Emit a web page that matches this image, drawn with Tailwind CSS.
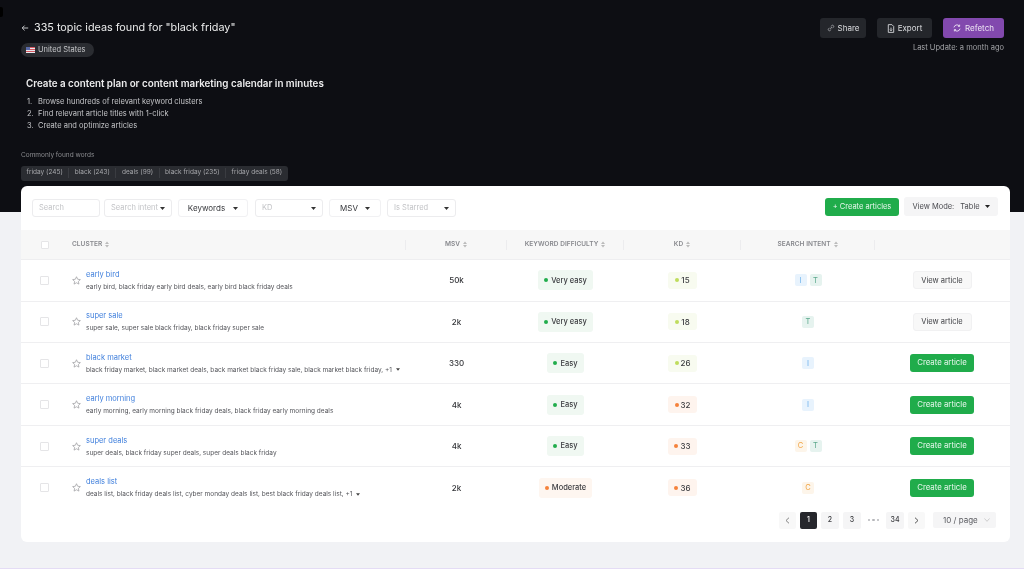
<!doctype html>
<html><head><meta charset="utf-8"><script src="https://cdn.jsdelivr.net/npm/@tailwindcss/browser@4"></script></head>
<body class="m-0">
<div class="relative w-[1024px] h-[569px] overflow-hidden bg-[#f1f2f5] font-['Inter',sans-serif] flex flex-col border-b border-[#e4dcf5] blur-[0.35px]">
  <span class="absolute left-0 top-[7px] w-[3px] h-[10px] rounded-r-[2px] bg-black"></span>
  <header class="h-[212px] shrink-0 bg-[#0d0e13] pl-[21px] pr-[20px] pt-[18px] text-white">
    <div class="flex justify-between items-start">
      <div>
        <div class="flex items-center gap-[5px] h-[19px]">
          <svg class="w-[8px] h-[8px]" viewBox="0 0 10 10" fill="none" stroke="#c8c9cc" stroke-width="1.2"><path d="M9 5H1.500M4.500 2 1.500 5l3 3"/></svg>
          <span class="text-[10.800px] leading-[19px] text-[#eceded]">335 topic ideas found for "black friday"</span>
        </div>
        <div class="mt-[6px] flex w-[73px] items-center gap-[3px] h-[14px] px-[5px] rounded-full bg-[#2a2c31] text-[7.500px] text-[#c5c6c9]">
          <svg class="w-[9px] h-[6px]" viewBox="0 0 9 6"><rect width="9" height="6" fill="#e8e8ee"/><path d="M0 .5h9M0 2.500h9M0 4.500h9" stroke="#d4565f"/><rect width="4" height="3" fill="#5a6aa8"/></svg>
          United States
        </div>
      </div>
      <div class="flex flex-col items-end">
        <div class="flex gap-[11px]">
          <button class="h-[20px] w-[46px] rounded-[3px] bg-[#24262b] text-[8px] text-[#dcdde0] flex items-center justify-center gap-[3px]">
            <svg class="w-[8px] h-[8px]" viewBox="0 0 10 10" fill="none" stroke="#a9abb0" stroke-width="1"><path d="M4 6 6.200 3.800M3.300 4.700 2 6a1.400 1.400 0 0 0 2 2l1.300-1.300M4.700 3.300 6 2a1.400 1.400 0 0 1 2 2L6.700 5.300"/></svg>Share</button>
          <button class="h-[20px] w-[55px] rounded-[3px] bg-[#24262b] text-[8px] text-[#dcdde0] flex items-center justify-center gap-[3px]">
            <svg class="w-[8px] h-[9px]" viewBox="0 0 8 10" fill="none" stroke="#d5d6d9" stroke-width="1"><path d="M1 .7h4l2 2v6.600H1zM4 4v3.500M2.800 6.300 4 7.500l1.200-1.200"/></svg>Export</button>
          <button class="h-[20px] w-[61px] rounded-[3px] bg-[#8249ae] text-[8px] text-[#ece3f3] flex items-center justify-center gap-[4px]">
            <svg class="w-[8px] h-[8px]" viewBox="0 0 10 10" fill="none" stroke="#f0e8f6" stroke-width="1.100"><path d="M1.200 4.200A3.900 3.900 0 0 1 8 2.500M8.800 5.800A3.900 3.900 0 0 1 2 7.500M8.300.8V2.900H6.200M1.700 9.200V7.100H3.800"/></svg>Refetch</button>
        </div>
        <div class="mt-[4px] text-[7.500px] leading-[11px] text-[#a3a4a8]">Last Update: a month ago</div>
      </div>
    </div>
    <div class="mt-[20px] pl-[5px]">
      <h2 class="text-[9.800px] leading-[14px] font-semibold text-[#ececed]">Create a content plan or content marketing calendar in minutes</h2>
      <ol class="mt-[5px] text-[7.500px] leading-[12px] text-[#c4c5c8]">
        <li class="flex"><span class="w-[12px] pl-[1px]">1.</span>Browse hundreds of relevant keyword clusters</li>
        <li class="flex"><span class="w-[12px] pl-[1px]">2.</span>Find relevant article titles with 1-click</li>
        <li class="flex"><span class="w-[12px] pl-[1px]">3.</span>Create and optimize articles</li>
      </ol>
    </div>
    <div class="mt-[19px] text-[6.500px] leading-[9px] text-[#8b8c90]">Commonly found words</div>
    <div class="mt-[6px] flex w-fit h-[14.500px] rounded-[3px] bg-[#2a2c31] text-[6.500px] text-[#a5a6aa] items-center divide-x divide-[#3a3c41]">
      <span class="px-[5.500px]">friday (245)</span><span class="px-[5.500px]">black (243)</span><span class="px-[5.500px]">deals (99)</span><span class="px-[5.500px]">black friday (235)</span><span class="px-[5.500px]">friday deals (58)</span>
    </div>
  </header>

  <main class="mx-[21px] -mt-[26px] w-[989px] h-[356px] shrink-0 bg-white rounded-[6px] relative flex flex-col">
    <div class="h-[44.300px] shrink-0 flex items-start justify-between pl-[11px] pr-[12px] pt-[11px]">
      <div class="flex items-center pt-[2px] text-[7.500px] whitespace-nowrap">
        <div class="w-[68px] h-[18px] rounded-[3px] border border-[#ececee] px-[6px] flex items-center text-[#c2c3c6]">Search</div>
        <div class="ml-[4px] w-[68px] h-[18px] rounded-[3px] border border-[#ececee] px-[6px] flex items-center justify-between text-[#c2c3c6]">Search intent<svg class="w-[5px] h-[3px]" viewBox="0 0 5 3"><path d="M0 0h5L2.500 3z" fill="#333"/></svg></div>
        <div class="ml-[6px] w-[70px] h-[18px] rounded-[3px] border border-[#f1f1f3] flex items-center justify-center gap-[8px] text-[8px] text-[#37383c]">Keywords<svg class="w-[5px] h-[3px]" viewBox="0 0 5 3"><path d="M0 0h5L2.500 3z" fill="#333"/></svg></div>
        <div class="ml-[7px] w-[68px] h-[18px] rounded-[3px] border border-[#ececee] px-[6px] flex items-center justify-between text-[#c2c3c6]">KD<svg class="w-[5px] h-[3px]" viewBox="0 0 5 3"><path d="M0 0h5L2.500 3z" fill="#333"/></svg></div>
        <div class="ml-[6px] w-[52px] h-[18px] rounded-[3px] border border-[#f1f1f3] flex items-center justify-center gap-[7px] text-[8px] text-[#37383c]">MSV<svg class="w-[5px] h-[3px]" viewBox="0 0 5 3"><path d="M0 0h5L2.500 3z" fill="#333"/></svg></div>
        <div class="ml-[6px] w-[69px] h-[18px] rounded-[3px] border border-[#ececee] px-[6px] flex items-center justify-between text-[#c2c3c6]">Is Starred<svg class="w-[5px] h-[3px]" viewBox="0 0 5 3"><path d="M0 0h5L2.500 3z" fill="#333"/></svg></div>
      </div>
      <div class="flex items-center gap-[5px]">
        <button class="w-[74px] h-[18px] rounded-[3px] bg-[#20ac4b] text-[7.500px] text-[#e9f7ee] flex items-center justify-center">+ Create articles</button>
        <div class="w-[94px] h-[19px] rounded-[3px] bg-[#f5f5f6] text-[7.500px] text-[#4a4b50] flex items-center justify-center gap-[6px]"><span>View Mode:</span><span class="flex items-center gap-[5px]">Table<svg class="w-[5px] h-[3px]" viewBox="0 0 5 3"><path d="M0 0h5L2.500 3z" fill="#222"/></svg></span></div>
      </div>
    </div>

    <div class="h-[30px] shrink-0 bg-[#f7f7f7] border-b border-[#eeeef0] grid grid-cols-[39px_346px_101px_117px_117px_134px_135px] items-center text-[6.500px] font-semibold tracking-[0.05px] text-[#87888d] text-center">
      <div class="flex justify-center pl-[8px]"><span class="w-[8px] h-[8px] rounded-[1px] border border-[#e5e5e7] bg-white"></span></div>
      <div class="h-[10px] flex items-center gap-[3px] border-r border-[#ececee] text-left pl-[12px]">CLUSTER<svg class="w-[4px] h-[7px]" viewBox="0 0 4 7"><path d="M0 3 2 .5 4 3zM0 4l2 2.500L4 4z" fill="#bbb"/></svg></div>
      <div class="h-[10px] flex items-center justify-center gap-[3px] border-r border-[#ececee]">MSV<svg class="w-[4px] h-[7px]" viewBox="0 0 4 7"><path d="M0 3 2 .5 4 3zM0 4l2 2.500L4 4z" fill="#bbb"/></svg></div>
      <div class="h-[10px] flex items-center justify-center gap-[3px] border-r border-[#ececee]">KEYWORD DIFFICULTY<svg class="w-[4px] h-[7px]" viewBox="0 0 4 7"><path d="M0 3 2 .5 4 3zM0 4l2 2.500L4 4z" fill="#bbb"/></svg></div>
      <div class="h-[10px] flex items-center justify-center gap-[3px] border-r border-[#ececee]">KD<svg class="w-[4px] h-[7px]" viewBox="0 0 4 7"><path d="M0 3 2 .5 4 3zM0 4l2 2.500L4 4z" fill="#bbb"/></svg></div>
      <div class="h-[10px] flex items-center justify-center gap-[3px] border-r border-[#ececee]">SEARCH INTENT<svg class="w-[4px] h-[7px]" viewBox="0 0 4 7"><path d="M0 3 2 .5 4 3zM0 4l2 2.500L4 4z" fill="#bbb"/></svg></div>
      <div></div>
    </div>

    <!-- row 1 -->
    <div class="h-[41.400px] shrink-0 border-b border-[#efeff1] grid grid-cols-[39px_346px_101px_117px_117px_134px_135px] items-center text-center">
      <div class="flex justify-center pl-[8px]"><span class="w-[9px] h-[9px] rounded-[1px] border border-[#e5e5e7]"></span></div>
      <div class="flex items-center pl-[12px] text-left whitespace-nowrap"><svg class="w-[9px] h-[9px] mr-[5px]" viewBox="0 0 10 10" fill="none" stroke="#9a9b9f" stroke-width=".8"><path d="m5 .8 1.300 2.800 3 .4-2.200 2 .6 3L5 7.500 2.300 9l.6-3L.7 4l3-.4z"/></svg><div><div class="text-[7.500px] leading-[12px] text-[#3f7fdc]">early bird</div><div class="mt-[1px] text-[6.500px] leading-[10px] text-[#54555a]">early bird, black friday early bird deals, early bird black friday deals</div></div></div>
      <div class="text-[8px] font-medium text-[#333438]">50k</div>
      <div class="flex justify-center"><span class="h-[20px] px-[6px] rounded-[3px] bg-[#f0f8f2] flex items-center gap-[3px] text-[7.500px] font-medium text-[#3c3d41]"><i class="w-[4px] h-[4px] rounded-full bg-[#21ad4c]"></i>Very easy</span></div>
      <div class="flex justify-center"><span class="h-[17px] w-[29px] rounded-[3px] bg-[#f8fbf0] flex items-center justify-center gap-[2px] text-[8px] font-medium text-[#3c3d41]"><i class="w-[4px] h-[4px] rounded-full bg-[#bfdc5c]"></i>15</span></div>
      <div class="flex justify-center gap-[3px] text-[7.500px]"><span class="w-[12px] h-[12px] rounded-[2px] bg-[#e8f3fd] text-[#6db2ec] flex items-center justify-center">I</span><span class="w-[12px] h-[12px] rounded-[2px] bg-[#e6f3ef] text-[#5ba88c] flex items-center justify-center">T</span></div>
      <div class="flex justify-center"><button class="w-[59px] h-[18px] rounded-[3px] bg-[#f8f8f8] border border-[#f1f1f2] text-[7.500px] text-[#414246] ml-[-1px]">View article</button></div>
    </div>
    <!-- row 2 -->
    <div class="h-[41.400px] shrink-0 border-b border-[#efeff1] grid grid-cols-[39px_346px_101px_117px_117px_134px_135px] items-center text-center">
      <div class="flex justify-center pl-[8px]"><span class="w-[9px] h-[9px] rounded-[1px] border border-[#e5e5e7]"></span></div>
      <div class="flex items-center pl-[12px] text-left whitespace-nowrap"><svg class="w-[9px] h-[9px] mr-[5px]" viewBox="0 0 10 10" fill="none" stroke="#9a9b9f" stroke-width=".8"><path d="m5 .8 1.300 2.800 3 .4-2.200 2 .6 3L5 7.500 2.300 9l.6-3L.7 4l3-.4z"/></svg><div><div class="text-[7.500px] leading-[12px] text-[#3f7fdc]">super sale</div><div class="mt-[1px] text-[6.500px] leading-[10px] text-[#54555a]">super sale, super sale black friday, black friday super sale</div></div></div>
      <div class="text-[8px] font-medium text-[#333438]">2k</div>
      <div class="flex justify-center"><span class="h-[20px] px-[6px] rounded-[3px] bg-[#f0f8f2] flex items-center gap-[3px] text-[7.500px] font-medium text-[#3c3d41]"><i class="w-[4px] h-[4px] rounded-full bg-[#21ad4c]"></i>Very easy</span></div>
      <div class="flex justify-center"><span class="h-[17px] w-[29px] rounded-[3px] bg-[#f8fbf0] flex items-center justify-center gap-[2px] text-[8px] font-medium text-[#3c3d41]"><i class="w-[4px] h-[4px] rounded-full bg-[#bfdc5c]"></i>18</span></div>
      <div class="flex justify-center gap-[3px] text-[7.500px]"><span class="w-[12px] h-[12px] rounded-[2px] bg-[#e6f3ef] text-[#5ba88c] flex items-center justify-center">T</span></div>
      <div class="flex justify-center"><button class="w-[59px] h-[18px] rounded-[3px] bg-[#f8f8f8] border border-[#f1f1f2] text-[7.500px] text-[#414246] ml-[-1px]">View article</button></div>
    </div>
    <!-- row 3 -->
    <div class="h-[41.400px] shrink-0 border-b border-[#efeff1] grid grid-cols-[39px_346px_101px_117px_117px_134px_135px] items-center text-center">
      <div class="flex justify-center pl-[8px]"><span class="w-[9px] h-[9px] rounded-[1px] border border-[#e5e5e7]"></span></div>
      <div class="flex items-center pl-[12px] text-left whitespace-nowrap"><svg class="w-[9px] h-[9px] mr-[5px]" viewBox="0 0 10 10" fill="none" stroke="#9a9b9f" stroke-width=".8"><path d="m5 .8 1.300 2.800 3 .4-2.200 2 .6 3L5 7.500 2.300 9l.6-3L.7 4l3-.4z"/></svg><div><div class="text-[7.500px] leading-[12px] text-[#3f7fdc]">black market</div><div class="mt-[1px] text-[6.500px] leading-[10px] text-[#54555a] flex items-center gap-[3px]">black friday market, black market deals, back market black friday sale, black market black friday, +1<svg class="w-[4px] h-[3px] ml-[1px]" viewBox="0 0 5 3"><path d="M0 0h5L2.500 3z" fill="#444"/></svg></div></div></div>
      <div class="text-[8px] font-medium text-[#333438]">330</div>
      <div class="flex justify-center"><span class="h-[20px] px-[6px] rounded-[3px] bg-[#f0f8f2] flex items-center gap-[3px] text-[7.500px] font-medium text-[#3c3d41]"><i class="w-[4px] h-[4px] rounded-full bg-[#21ad4c]"></i>Easy</span></div>
      <div class="flex justify-center"><span class="h-[17px] w-[29px] rounded-[3px] bg-[#f8fbf0] flex items-center justify-center gap-[2px] text-[8px] font-medium text-[#3c3d41]"><i class="w-[4px] h-[4px] rounded-full bg-[#bfdc5c]"></i>26</span></div>
      <div class="flex justify-center gap-[3px] text-[7.500px]"><span class="w-[12px] h-[12px] rounded-[2px] bg-[#e8f3fd] text-[#6db2ec] flex items-center justify-center">I</span></div>
      <div class="flex justify-center"><button class="w-[64px] h-[18px] rounded-[3px] bg-[#20ac4b] text-[7.800px] text-[#e9f7ee] ml-[-1px]">Create article</button></div>
    </div>
    <!-- row 4 -->
    <div class="h-[41.400px] shrink-0 border-b border-[#efeff1] grid grid-cols-[39px_346px_101px_117px_117px_134px_135px] items-center text-center">
      <div class="flex justify-center pl-[8px]"><span class="w-[9px] h-[9px] rounded-[1px] border border-[#e5e5e7]"></span></div>
      <div class="flex items-center pl-[12px] text-left whitespace-nowrap"><svg class="w-[9px] h-[9px] mr-[5px]" viewBox="0 0 10 10" fill="none" stroke="#9a9b9f" stroke-width=".8"><path d="m5 .8 1.300 2.800 3 .4-2.200 2 .6 3L5 7.500 2.300 9l.6-3L.7 4l3-.4z"/></svg><div><div class="text-[7.500px] leading-[12px] text-[#3f7fdc]">early morning</div><div class="mt-[1px] text-[6.500px] leading-[10px] text-[#54555a]">early morning, early morning black friday deals, black friday early morning deals</div></div></div>
      <div class="text-[8px] font-medium text-[#333438]">4k</div>
      <div class="flex justify-center"><span class="h-[20px] px-[6px] rounded-[3px] bg-[#f0f8f2] flex items-center gap-[3px] text-[7.500px] font-medium text-[#3c3d41]"><i class="w-[4px] h-[4px] rounded-full bg-[#21ad4c]"></i>Easy</span></div>
      <div class="flex justify-center"><span class="h-[17px] w-[29px] rounded-[3px] bg-[#fef4ee] flex items-center justify-center gap-[2px] text-[8px] font-medium text-[#3c3d41]"><i class="w-[4px] h-[4px] rounded-full bg-[#f5813a]"></i>32</span></div>
      <div class="flex justify-center gap-[3px] text-[7.500px]"><span class="w-[12px] h-[12px] rounded-[2px] bg-[#e8f3fd] text-[#6db2ec] flex items-center justify-center">I</span></div>
      <div class="flex justify-center"><button class="w-[64px] h-[18px] rounded-[3px] bg-[#20ac4b] text-[7.800px] text-[#e9f7ee] ml-[-1px]">Create article</button></div>
    </div>
    <!-- row 5 -->
    <div class="h-[41.400px] shrink-0 border-b border-[#efeff1] grid grid-cols-[39px_346px_101px_117px_117px_134px_135px] items-center text-center">
      <div class="flex justify-center pl-[8px]"><span class="w-[9px] h-[9px] rounded-[1px] border border-[#e5e5e7]"></span></div>
      <div class="flex items-center pl-[12px] text-left whitespace-nowrap"><svg class="w-[9px] h-[9px] mr-[5px]" viewBox="0 0 10 10" fill="none" stroke="#9a9b9f" stroke-width=".8"><path d="m5 .8 1.300 2.800 3 .4-2.200 2 .6 3L5 7.500 2.300 9l.6-3L.7 4l3-.4z"/></svg><div><div class="text-[7.500px] leading-[12px] text-[#3f7fdc]">super deals</div><div class="mt-[1px] text-[6.500px] leading-[10px] text-[#54555a]">super deals, black friday super deals, super deals black friday</div></div></div>
      <div class="text-[8px] font-medium text-[#333438]">4k</div>
      <div class="flex justify-center"><span class="h-[20px] px-[6px] rounded-[3px] bg-[#f0f8f2] flex items-center gap-[3px] text-[7.500px] font-medium text-[#3c3d41]"><i class="w-[4px] h-[4px] rounded-full bg-[#21ad4c]"></i>Easy</span></div>
      <div class="flex justify-center"><span class="h-[17px] w-[29px] rounded-[3px] bg-[#fef4ee] flex items-center justify-center gap-[2px] text-[8px] font-medium text-[#3c3d41]"><i class="w-[4px] h-[4px] rounded-full bg-[#f5813a]"></i>33</span></div>
      <div class="flex justify-center gap-[3px] text-[7.500px]"><span class="w-[12px] h-[12px] rounded-[2px] bg-[#fdf5ea] text-[#f0a545] flex items-center justify-center">C</span><span class="w-[12px] h-[12px] rounded-[2px] bg-[#e6f3ef] text-[#5ba88c] flex items-center justify-center">T</span></div>
      <div class="flex justify-center"><button class="w-[64px] h-[18px] rounded-[3px] bg-[#20ac4b] text-[7.800px] text-[#e9f7ee] ml-[-1px]">Create article</button></div>
    </div>
    <!-- row 6 -->
    <div class="h-[41.400px] shrink-0 grid grid-cols-[39px_346px_101px_117px_117px_134px_135px] items-center text-center">
      <div class="flex justify-center pl-[8px]"><span class="w-[9px] h-[9px] rounded-[1px] border border-[#e5e5e7]"></span></div>
      <div class="flex items-center pl-[12px] text-left whitespace-nowrap"><svg class="w-[9px] h-[9px] mr-[5px]" viewBox="0 0 10 10" fill="none" stroke="#9a9b9f" stroke-width=".8"><path d="m5 .8 1.300 2.800 3 .4-2.200 2 .6 3L5 7.500 2.300 9l.6-3L.7 4l3-.4z"/></svg><div><div class="text-[7.500px] leading-[12px] text-[#3f7fdc]">deals list</div><div class="mt-[1px] text-[6.500px] leading-[10px] text-[#54555a] flex items-center gap-[3px]">deals list, black friday deals list, cyber monday deals list, best black friday deals list, +1<svg class="w-[4px] h-[3px] ml-[1px]" viewBox="0 0 5 3"><path d="M0 0h5L2.500 3z" fill="#444"/></svg></div></div></div>
      <div class="text-[8px] font-medium text-[#333438]">2k</div>
      <div class="flex justify-center"><span class="h-[20px] px-[6px] rounded-[3px] bg-[#fef6f0] flex items-center gap-[3px] text-[7.500px] font-medium text-[#3c3d41]"><i class="w-[4px] h-[4px] rounded-full bg-[#f5813a]"></i>Moderate</span></div>
      <div class="flex justify-center"><span class="h-[17px] w-[29px] rounded-[3px] bg-[#fef4ee] flex items-center justify-center gap-[2px] text-[8px] font-medium text-[#3c3d41]"><i class="w-[4px] h-[4px] rounded-full bg-[#f5813a]"></i>36</span></div>
      <div class="flex justify-center gap-[3px] text-[7.500px]"><span class="w-[12px] h-[12px] rounded-[2px] bg-[#fdf5ea] text-[#f0a545] flex items-center justify-center">C</span></div>
      <div class="flex justify-center"><button class="w-[64px] h-[18px] rounded-[3px] bg-[#20ac4b] text-[7.800px] text-[#e9f7ee] ml-[-1px]">Create article</button></div>
    </div>

    <div class="flex justify-end items-center pr-[14px] mt-[3px] gap-[4px] text-[7px] font-medium text-[#3c3d41]">
      <span class="w-[17px] h-[17px] rounded-[2px] bg-[#f8f8f8] flex items-center justify-center"><svg class="w-[5px] h-[7px]" viewBox="0 0 5 7" fill="none" stroke="#777" stroke-width=".9"><path d="M4 .7 1 3.500 4 6.300"/></svg></span>
      <span class="w-[17px] h-[17px] rounded-[2px] bg-[#26272c] text-white flex items-center justify-center">1</span>
      <span class="w-[18px] h-[17px] rounded-[2px] bg-[#f5f5f6] flex items-center justify-center">2</span>
      <span class="w-[18px] h-[17px] rounded-[2px] bg-[#f5f5f6] flex items-center justify-center">3</span>
      <span class="w-[17px] h-[17px] text-[#b5b6ba] flex items-center justify-center gap-[2px]"><i class="w-[2.500px] h-[2.500px] rounded-full bg-[#b5b6ba]"></i><i class="w-[2.500px] h-[2.500px] rounded-full bg-[#b5b6ba]"></i><i class="w-[2.500px] h-[2.500px] rounded-full bg-[#b5b6ba]"></i></span>
      <span class="w-[18px] h-[17px] rounded-[2px] bg-[#f5f5f6] flex items-center justify-center">34</span>
      <span class="w-[17px] h-[17px] rounded-[2px] bg-[#f8f8f8] flex items-center justify-center"><svg class="w-[5px] h-[7px]" viewBox="0 0 5 7" fill="none" stroke="#444" stroke-width=".9"><path d="M1 .7 4 3.500 1 6.300"/></svg></span>
      <span class="ml-[4px] w-[63px] h-[16px] rounded-[2px] bg-[#f5f5f6] flex items-center justify-between pl-[10px] pr-[6px] text-[8px] font-normal text-[#5a5b60]">10 / page<svg class="w-[6px] h-[4px]" viewBox="0 0 6 4" fill="none" stroke="#bbb" stroke-width=".7"><path d="M.5.500 3 3.300 5.500.500"/></svg></span>
    </div>
  </main>
</div>
</body></html>
